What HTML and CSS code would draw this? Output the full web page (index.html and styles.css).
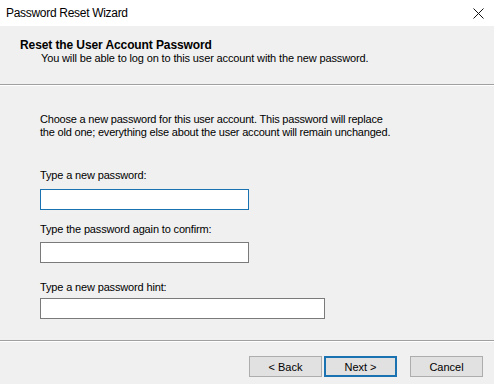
FILE: index.html
```html
<!DOCTYPE html>
<html>
<head>
<meta name="viewport" content="width=device-width, initial-scale=1">
<link rel="stylesheet" href="styles.css">
</head>
<body>

<div class="wizard">
  <div class="titlebar">
    <span class="title">Password Reset Wizard</span>
    <span class="close">
      <svg width="11" height="11" viewBox="0 0 11 11"><path d="M0.5 0.5 L10.5 10.5 M10.5 0.5 L0.5 10.5" stroke="#111" stroke-width="1" fill="none"/></svg>
    </span>
  </div>

  <div class="header">
    <div class="header-title">Reset the User Account Password</div>
    <div class="header-sub">You will be able to log on to this user account with the new password.</div>
  </div>

  <form class="page">
    <p class="intro">Choose a new password for this user account. This password will replace<br>the old one; everything else about the user account will remain unchanged.</p>

    <label class="field first">Type a new password:</label>
    <input type="password" class="box focused">

    <label class="field second">Type the password again to confirm:</label>
    <input type="password" class="box">

    <label class="field third">Type a new password hint:</label>
    <input type="text" class="box wide">
  </form>

  <div class="footer">
    <button type="button" class="btn">&lt; Back</button>
    <button type="button" class="btn default">Next &gt;</button>
    <button type="button" class="btn cancel">Cancel</button>
  </div>
</div>

</body>
</html>
```

FILE: styles.css
```css
body {
    margin: 0;
    font-family: "Liberation Sans", Arial, sans-serif;
    font-size: 11px;
    color: #000;
}

.wizard {
    width: 494px;
    height: 384px;
    background-color: #f0f0f0;
    display: flex;
    flex-direction: column;
    overflow: hidden;
}

/* Window title bar */
.titlebar {
    height: 26px;
    background-color: #fff;
    display: flex;
    align-items: center;
    justify-content: space-between;
    padding: 0 10px 0 6px;
}

.title {
    font-size: 12px;
    letter-spacing: -0.3px;
}

.close {
    display: flex;
}

/* Wizard header strip */
.header {
    height: 59px;
    box-sizing: border-box;
    padding: 13px 0 0 20px;
    border-bottom: 1px solid #a0a0a0;
    box-shadow: 0 1px 0 #fff;
}

.header-title {
    font-weight: bold;
    font-size: 12px;
    line-height: 13px;
    letter-spacing: -0.1px;
}

.header-sub {
    padding-left: 21px;
    line-height: 13px;
    letter-spacing: -0.14px;
}

/* Main page */
.page {
    flex: 1;
    display: flex;
    flex-direction: column;
    align-items: flex-start;
    padding: 28px 0 0 40px;
    margin: 0;
    border-bottom: 1px solid #a0a0a0;
    box-shadow: 0 1px 0 #fff;
}

.intro {
    margin: 0;
    line-height: 13px;
    letter-spacing: -0.2px;
}

.field {
    display: block;
    line-height: 13px;
    letter-spacing: -0.15px;
}

.field.first { margin: 30px 0 7px 0; }
.field.second { margin: 13px 0 6px 0; }
.field.third { margin: 18px 0 4px 0; }

.box {
    width: 209px;
    height: 21px;
    box-sizing: border-box;
    margin: 0;
    border: 1px solid #7a7a7a;
    background-color: #fff;
    padding: 0 3px;
}

.box.focused {
    border-color: #1a73b0;
}

.box.wide {
    width: 285px;
}

/* Button row */
.footer {
    height: 43px;
    display: flex;
    align-items: flex-start;
    justify-content: flex-end;
    padding: 15px 11px 0 0;
    box-sizing: border-box;
}

.btn {
    width: 73px;
    height: 21px;
    margin: 0 0 0 2px;
    padding: 0;
    font-family: "Liberation Sans", Arial, sans-serif;
    font-size: 11px;
    color: #000;
    background-color: #e1e1e1;
    border: 1px solid #adadad;
}

.btn.default {
    border: 2px solid #1a73b0;
}

.btn.cancel {
    margin-left: 13px;
}
```
